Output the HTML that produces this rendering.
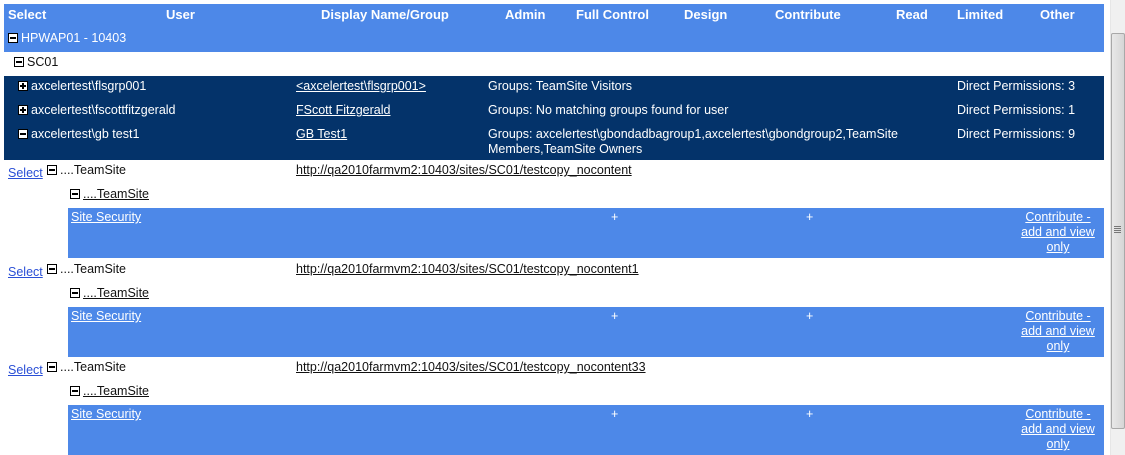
<!DOCTYPE html><html><head><style>
body{margin:0;width:1125px;height:455px;overflow:hidden;background:#fff;font-family:"Liberation Sans",sans-serif;font-size:12.5px;position:relative}
.a{position:absolute;white-space:nowrap}
.b{position:absolute;background:#4d88e8}
.n{position:absolute;background:#04336a}
.w{color:#fff}.u{text-decoration:underline}
.k{color:#111}.lk{color:#2a4fd6}
.h{font-weight:bold;color:#fff;font-size:13px}
.bx{display:inline-block;width:8px;height:8px;border:1px solid #000;background:#fff;position:relative;margin-right:3px;vertical-align:-1px}
.bx:before{content:"";position:absolute;left:1px;top:3px;width:6px;height:2px;background:#000}
.bx.p:after{content:"";position:absolute;left:3px;top:1px;width:2px;height:6px;background:#000}
.wb{border-color:#fff}
</style></head><body>
<div class="b" style="left:4px;top:4px;width:1100px;height:48px"></div>
<div class="a h" style="left:8px;top:7px">Select</div>
<div class="a h" style="left:166px;top:7px">User</div>
<div class="a h" style="left:321px;top:7px">Display Name/Group</div>
<div class="a h" style="left:505px;top:7px">Admin</div>
<div class="a h" style="left:576px;top:7px">Full Control</div>
<div class="a h" style="left:684px;top:7px">Design</div>
<div class="a h" style="left:775px;top:7px">Contribute</div>
<div class="a h" style="left:896px;top:7px">Read</div>
<div class="a h" style="left:957px;top:7px">Limited</div>
<div class="a h" style="left:1040px;top:7px">Other</div>
<div class="a w" style="left:8px;top:31px"><span class="bx"></span>HPWAP01 - 10403</div>
<div class="a k" style="left:14px;top:55px"><span class="bx"></span>SC01</div>
<div class="n" style="left:4px;top:76px;width:1100px;height:84px"></div>
<div class="a w" style="left:18px;top:79px"><span class="bx p"></span>axcelertest\flsgrp001</div>
<div class="a w u" style="left:296px;top:79px">&lt;axcelertest\flsgrp001&gt;</div>
<div class="a w" style="left:488px;top:79px">Groups: TeamSite Visitors</div>
<div class="a w" style="left:957px;top:79px">Direct Permissions: 3</div>
<div class="a w" style="left:18px;top:103px"><span class="bx p"></span>axcelertest\fscottfitzgerald</div>
<div class="a w u" style="left:296px;top:103px">FScott Fitzgerald</div>
<div class="a w" style="left:488px;top:103px">Groups: No matching groups found for user</div>
<div class="a w" style="left:957px;top:103px">Direct Permissions: 1</div>
<div class="a w" style="left:18px;top:127px"><span class="bx"></span>axcelertest\gb test1</div>
<div class="a w u" style="left:296px;top:127px">GB Test1</div>
<div class="a w" style="left:488px;top:127px;line-height:15px">Groups: axcelertest\gbondadbagroup1,axcelertest\gbondgroup2,TeamSite<br>Members,TeamSite Owners</div>
<div class="a w" style="left:957px;top:127px">Direct Permissions: 9</div>

<div id="g"></div>
<script>
var tops=[163,262,360],urls=["testcopy_nocontent","testcopy_nocontent1","testcopy_nocontent33"],h="";
tops.forEach(function(t,i){
h+='<div class="a lk u" style="left:8px;top:'+(t+3)+'px">Select</div>';
h+='<div class="a k" style="left:47px;top:'+t+'px"><span class="bx"></span>....TeamSite</div>';
h+='<div class="a k u" style="left:296px;top:'+t+'px">http://qa2010farmvm2:10403/sites/SC01/'+urls[i]+'</div>';
h+='<div class="a k" style="left:70px;top:'+(t+24)+'px"><span class="bx"></span><span class="u">....TeamSite</span></div>';
var bt=t+45;
h+='<div class="b" style="left:68px;top:'+bt+'px;width:1036px;height:50px"></div>';
h+='<div class="a w u" style="left:71px;top:'+(bt+2)+'px">Site Security</div>';
h+='<div class="a w" style="left:611px;top:'+(bt+2)+'px">+</div>';
h+='<div class="a w" style="left:806px;top:'+(bt+2)+'px">+</div>';
h+='<div class="a w u" style="left:1018px;top:'+(bt+2)+'px;text-align:center;line-height:15px;white-space:normal;width:80px">Contribute - add and view only</div>';
});
document.getElementById("g").innerHTML=h;
</script>
<div style="position:absolute;left:1110px;top:0;width:15px;height:455px;background:#f0f0f0;border-left:1px solid #e6e6e6"></div>
<div style="position:absolute;left:1111px;top:33px;width:12px;height:394px;background:linear-gradient(90deg,#e8e8e8,#d6d6d6);border:1px solid #a8a8a8;border-radius:2px"></div>
<div style="position:absolute;left:1114px;top:226px;width:7px;height:7px;background:repeating-linear-gradient(#777 0 1px,transparent 1px 2px)"></div>
</body></html>
